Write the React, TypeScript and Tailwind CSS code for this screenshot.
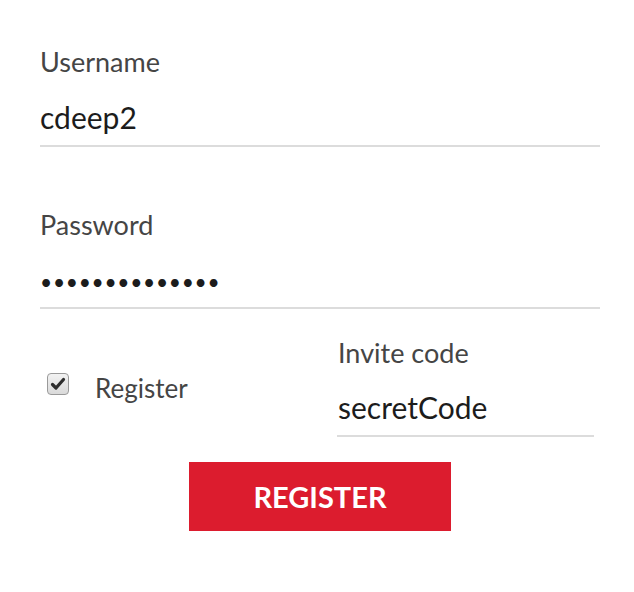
import React from "react";

export default function App() {
  return (
    <div className="w-[634px] h-[592px] bg-white" style={{ fontFamily: "Lato, 'Open Sans', sans-serif" }}>
      <div className="pl-[40px] pt-[46px] w-[600px]">
        {/* Username */}
        <div className="text-[27px] leading-[32px] text-[#454545]">Username</div>
        <div className="mt-[21px] text-[30px] leading-[36px] text-[#1c1c1c]">cdeep2</div>
        <div className="mt-[10px] h-[2px] bg-[#dcdcdc]" />

        {/* Password */}
        <div className="mt-[62px] text-[27px] leading-[32px] text-[#454545]">Password</div>
        <div className="mt-[23px] h-[36px] flex items-center text-[21px] leading-[36px] text-[#1c1c1c] tracking-[0.7px]">
          ••••••••••••••
        </div>
        <div className="mt-[7px] h-[2px] bg-[#dcdcdc]" />

        {/* Row */}
        <div className="flex mt-[28px]">
          <div className="w-[297px] flex items-start">
            <div className="ml-[7px] mt-[36px] w-[22px] h-[22px] rounded-[4px] border border-[#9a9a9a] bg-gradient-to-b from-[#f2f2f2] to-[#dadada] flex items-center justify-center">
              <svg width="16" height="16" viewBox="0 0 16 16">
                <path d="M2.5 8.5 L6 12 L13.5 3.5" fill="none" stroke="#2e2e2e" strokeWidth="3.2" strokeLinecap="round" strokeLinejoin="round" />
              </svg>
            </div>
            <div className="ml-[26px] mt-[35px] text-[26px] leading-[32px] text-[#454545]">Register</div>
          </div>
          <div className="w-[257px]">
            <div className="pl-[1px] text-[27px] leading-[32px] text-[#454545]">Invite code</div>
            <div className="pl-[1px] mt-[20px] text-[30px] leading-[36px] text-[#1c1c1c]">secretCode</div>
            <div className="mt-[10px] h-[2px] bg-[#dcdcdc]" />
          </div>
        </div>

        <div className="flex justify-center mt-[25px]">
          <button className="w-[262px] h-[69px] bg-[#dc1c2e] text-white text-[29px] font-bold leading-none">
            REGISTER
          </button>
        </div>
      </div>
    </div>
  );
}
